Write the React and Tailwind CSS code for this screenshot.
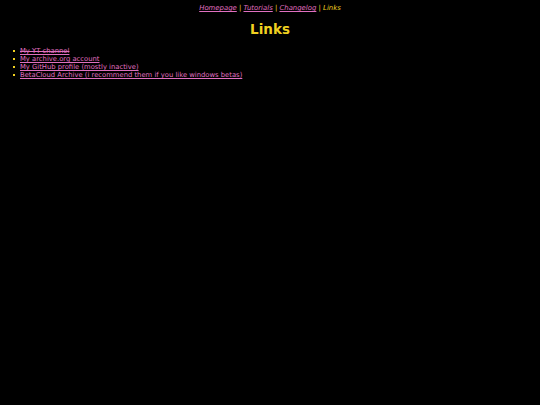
export default function App() {
    const links = [
        { text: "My YT channel", dead: true },
        { text: "My archive.org account" },
        { text: "My GitHub profile (mostly inactive)" },
        { text: "BetaCloud Archive (i recommend them if you like windows betas)" },
    ];
    return (
        <div className="min-h-[405px] bg-black px-[3.4px] pt-[4px] text-[6.8px] leading-[8px] text-[#f0d020] font-['DejaVu_Sans',sans-serif]">
            <div className="text-center italic text-[6.9px]">
                <a href="#" className="underline text-[#e070c0]">Homepage</a>
                {" | "}
                <a href="#" className="underline text-[#e070c0]">Tutorials</a>
                {" | "}
                <a href="#" className="underline text-[#e070c0]">Changelog</a>
                {" | "}
                <span>Links</span>
            </div>
            <h1 className="mt-[9px] mb-[10px] text-center text-[13.5px] leading-[16px] font-bold">Links</h1>
            <ul className="pl-[16.6px]">
                {links.map((l) => (
                    <li key={l.text} className="flex items-center">
                        <span className="w-[2px] h-[2px] bg-[#f0d020] -ml-[6.5px] mr-[4.5px] shrink-0"></span>
                        <a href="#" className={l.dead ? "text-[#e070c0] [text-decoration-line:underline_line-through]" : "text-[#e070c0] underline"}>
                            {l.text}
                        </a>
                    </li>
                ))}
            </ul>
        </div>
    );
}
